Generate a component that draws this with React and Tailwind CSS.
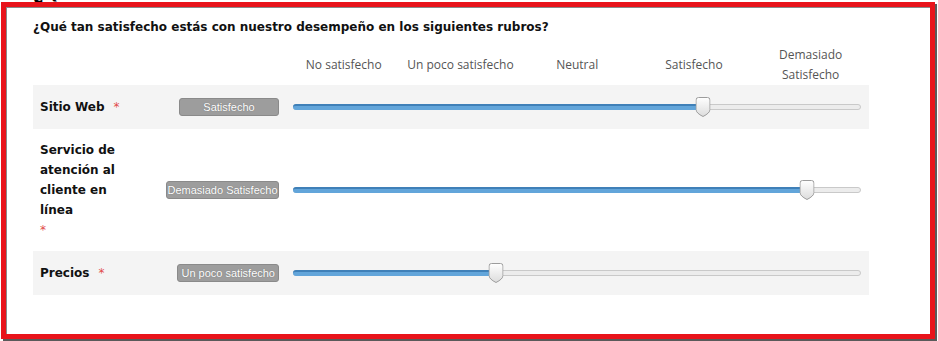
import React from 'react';

const columns = ['No satisfecho', 'Un poco satisfecho', 'Neutral', 'Satisfecho', 'Demasiado Satisfecho'];

const rows = [
  { label: 'Sitio Web', value: 'Satisfecho', pos: 72.2, shaded: true },
  { label: 'Servicio de atención al cliente en línea', value: 'Demasiado Satisfecho', pos: 90.7, stacked: true },
  { label: 'Precios', value: 'Un poco satisfecho', pos: 35.7, shaded: true },
];

const Handle = () => (
  <svg width="15" height="20" viewBox="0 0 15 20">
    <defs>
      <linearGradient id="hg" x1="0" y1="0" x2="0" y2="1">
        <stop offset="0" stopColor="#ffffff" />
        <stop offset="1" stopColor="#dcdcdc" />
      </linearGradient>
    </defs>
    <path
      d="M3 0.5 H12 Q14.5 0.5 14.5 3 V12.5 Q14.5 16 7.5 19.5 Q0.5 16 0.5 12.5 V3 Q0.5 0.5 3 0.5 Z"
      fill="url(#hg)"
      stroke="#9c9c9c"
    />
  </svg>
);

const Slider = ({ pos }) => (
  <div className="relative ml-[14px] w-[568px] h-[6px] rounded-full border border-[#c9c9c9] bg-[#ececec]">
    <div
      className="absolute -left-px -top-px h-[6px] rounded-l-full border-t-2 border-[#3f80b8] bg-[#62a5da]"
      style={{ width: `${pos}%` }}
    />
    <div className="absolute top-[-8px] -translate-x-1/2" style={{ left: `${pos}%` }}>
      <Handle />
    </div>
  </div>
);

const Row = ({ row }) => (
  <div className={`flex items-center px-[7px] ${row.shaded ? 'bg-[#f4f4f4] h-[44px]' : 'bg-white py-[11px]'}`}>
    <div className="w-[126px] text-[12px] font-bold text-[#111] leading-[20px] font-['DejaVu_Sans',sans-serif]">
      {row.stacked ? (
        <>
          <div className="w-[95px]">{row.label}</div>
          <div className="text-[#e24b4b] font-normal text-[12px]">*</div>
        </>
      ) : (
        <span>
          {row.label}
          <span className="ml-[9px] text-[#e24b4b] font-normal text-[12px]">*</span>
        </span>
      )}
    </div>
    <div className="w-[113px] flex justify-end">
      <div className="min-w-[100px] h-[18px] px-[3px] flex items-center justify-center whitespace-nowrap rounded-[3px] border border-[#8a8a8a] bg-[#9d9d9d] text-white text-[11px] font-['Liberation_Sans',sans-serif] [text-shadow:0_0_1px_#666]">
        {row.value}
      </div>
    </div>
    <Slider pos={row.pos} />
  </div>
);

export default function App() {
  return (
    <div className="relative w-[938px] h-[341px] bg-white overflow-hidden">
      <div className="absolute left-[33px] top-0 h-[2px] overflow-hidden">
        <div className="-mt-[16px] text-[18px] font-bold text-black font-['DejaVu_Sans',sans-serif] leading-[18px]">¿Q</div>
      </div>
      <div className="absolute left-[1px] top-[2px] w-[934px] h-[337px] border-[5px] border-[#e8141b] shadow-[2px_2px_0_0_#5a5a5a,inset_1px_1px_0_0_#8a8a8a] bg-white">
        <div className="pl-[27px] pt-[12px]">
          <div className="text-[12px] font-bold text-[#111] leading-[16px] font-['DejaVu_Sans',sans-serif]">
            ¿Qué tan satisfecho estás con nuestro desempeño en los siguientes rubros?
          </div>
          <div className="mt-[10px] w-[836px]">
            <div className="flex items-center h-[40px]">
              <div className="w-[253px]" />
              {columns.map((c) => (
                <div
                  key={c}
                  className="w-[117px] text-center text-[12px] leading-[20px] text-[#555] font-['Open_Sans',sans-serif]"
                >
                  {c}
                </div>
              ))}
            </div>
            {rows.map((r) => (
              <Row key={r.label} row={r} />
            ))}
          </div>
        </div>
      </div>
    </div>
  );
}
